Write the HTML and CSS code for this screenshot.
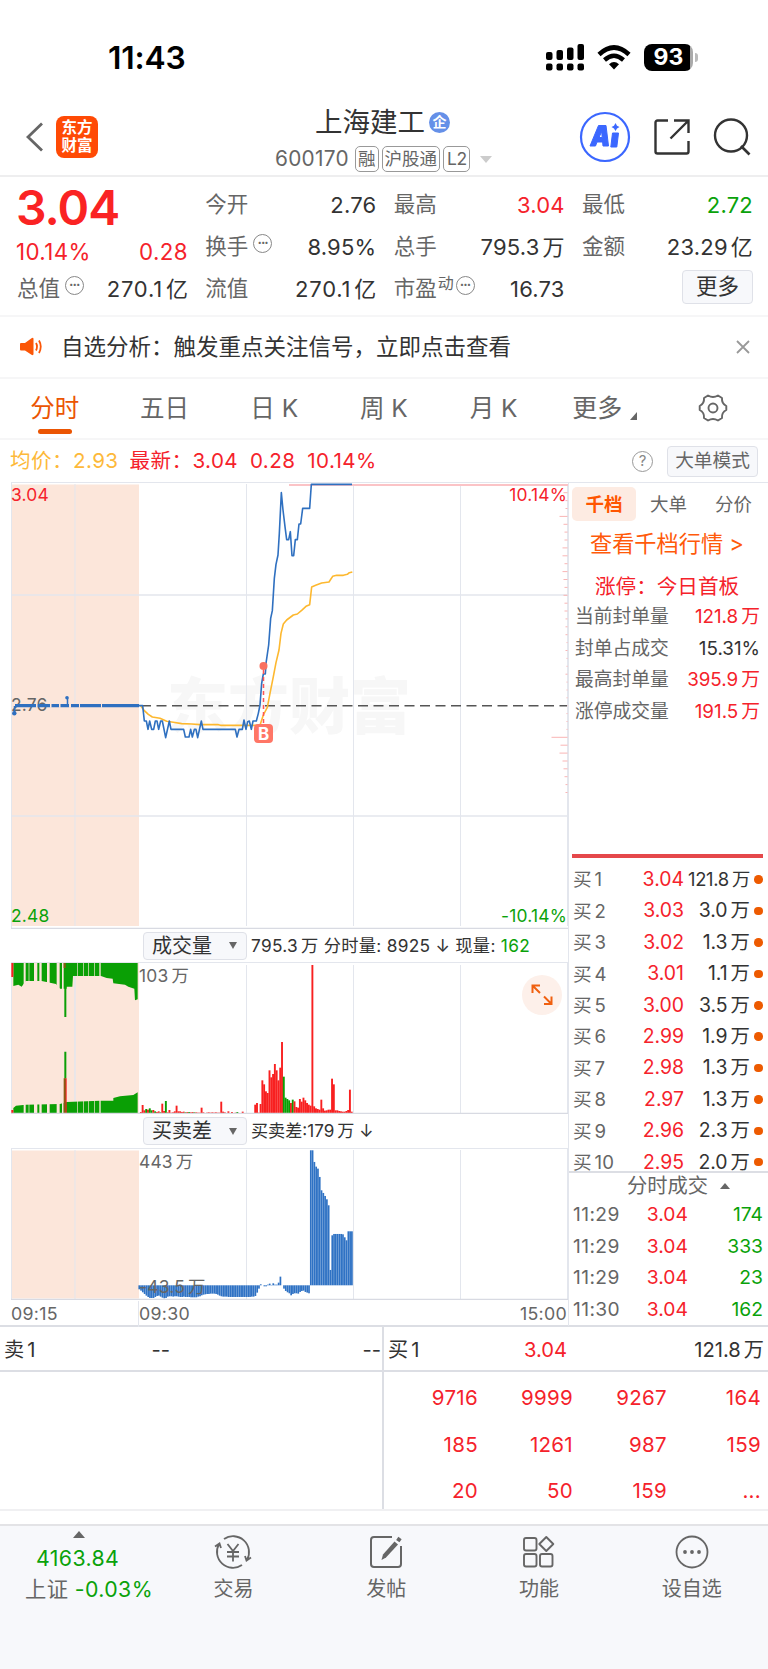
FILE: index.html
```html
<!DOCTYPE html>
<html lang="zh-CN">
<head>
    <meta charset="UTF-8">
    <meta name="viewport" content="width=device-width, initial-scale=1.0">
    <title>上海建工 600170</title>
    <link rel="stylesheet" href="styles.css">
</head>
<body>

<!-- Phone status bar -->
<div class="status-bar">
    <span class="clock">11:43</span>
    <div class="status-icons">
        <svg class="signal" width="38" height="27" viewBox="0 0 38 27">
            <g fill="#000">
                <rect x="0" y="8" width="6.5" height="8" rx="2"/>
                <rect x="10.5" y="6" width="6.5" height="10" rx="2"/>
                <rect x="21" y="3.5" width="6.5" height="12.5" rx="2"/>
                <rect x="31.5" y="0" width="6.5" height="16" rx="2"/>
                <rect x="0" y="19.5" width="6.5" height="7" rx="2"/>
                <rect x="10.5" y="19.5" width="6.5" height="7" rx="2"/>
                <rect x="21" y="19.5" width="6.5" height="7" rx="2"/>
                <rect x="31.5" y="19.5" width="6.5" height="7" rx="2"/>
            </g>
        </svg>
        <svg class="wifi" width="34" height="25" viewBox="0 0 34 25">
            <path d="M2 9.5 Q17 -4.5 32 9.5" fill="none" stroke="#000" stroke-width="4.6"/>
            <path d="M7.5 15 Q17 6.5 26.5 15" fill="none" stroke="#000" stroke-width="4.4"/>
            <path d="M12 19.2 Q17 14.8 22 19.2 L17 24.5 Z" fill="#000"/>
        </svg>
        <div class="battery"><span>93</span></div>
        <i class="battery-tip"></i>
    </div>
</div>

<!-- Title bar -->
<header class="title-bar">
    <div class="title-left">
        <svg width="18" height="30" viewBox="0 0 18 30"><path d="M16 1.5 L2 15 L16 28.5" fill="none" stroke="#666" stroke-width="2.8"/></svg>
        <div class="logo"><span>东方</span><span>财富</span></div>
    </div>
    <div class="title-center">
        <div class="stock-name">上海建工<span class="badge">企</span></div>
        <div class="stock-code">
            <span class="code">600170</span>
            <span class="tag">融</span><span class="tag">沪股通</span><span class="tag">L2</span>
            <i class="caret-light"></i>
        </div>
    </div>
    <div class="title-right">
        <svg width="52" height="52" viewBox="0 0 52 52">
            <circle cx="26" cy="26" r="24" fill="none" stroke="#3b67ff" stroke-width="2.2"/>
            <path d="M11 35 L19.5 14.5 H27 L29.5 35 H24 L23.6 31 H18 L16.5 35 Z M20 26.5 H23.2 L22.7 20.5 Z" fill="#3b67ff" fill-rule="evenodd" stroke="#3b67ff" stroke-linejoin="round"/>
            <path d="M33.5 22 H39.5 L37.8 36 H31.8 Z" fill="#3b67ff" stroke="#3b67ff" stroke-linejoin="round"/>
            <path d="M36.5 12 L38 14.7 L40.5 16 L38 17.5 L36.5 20 L35 17.5 L32.5 16 L35 14.7 Z" fill="#3b67ff"/>
        </svg>
        <svg width="36" height="36" viewBox="0 0 36 36">
            <path d="M14 1.5 H3.5 A2 2 0 0 0 1.5 3.5 V32.5 A2 2 0 0 0 3.5 34.5 H32.5 A2 2 0 0 0 34.5 32.5 V22 M20 1.5 H34.5 V14 M34 2 L16.5 19.5" fill="none" stroke="#333" stroke-width="2.4"/>
        </svg>
        <svg width="38" height="38" viewBox="0 0 38 38">
            <circle cx="18" cy="17.5" r="16" fill="none" stroke="#333" stroke-width="2.4"/>
            <path d="M28 28 L36.5 36.5" stroke="#333" stroke-width="2.6"/>
        </svg>
    </div>
</header>

<!-- Quote summary -->
<section class="quote">
    <div class="quote-col">
        <div class="big-price">3.04</div>
        <div class="cell change red"><span>10.14%</span><span>0.28</span></div>
        <div class="cell"><label>总值<i class="dots">•••</i></label><span class="wide">270.1<em>亿</em></span></div>
    </div>
    <div class="quote-col">
        <div class="cell"><label>今开</label><span>2.76</span></div>
        <div class="cell"><label>换手<i class="dots">•••</i></label><span>8.95%</span></div>
        <div class="cell"><label>流值</label><span class="wide">270.1<em>亿</em></span></div>
    </div>
    <div class="quote-col">
        <div class="cell"><label>最高</label><span class="red">3.04</span></div>
        <div class="cell"><label>总手</label><span>795.3<em>万</em></span></div>
        <div class="cell"><label>市盈<sup>动</sup><i class="dots tight">•••</i></label><span>16.73</span></div>
    </div>
    <div class="quote-col">
        <div class="cell"><label>最低</label><span class="green">2.72</span></div>
        <div class="cell"><label>金额</label><span>23.29<em>亿</em></span></div>
        <div class="cell right"><button class="more-btn">更多</button></div>
    </div>
</section>

<!-- Signal notice -->
<div class="notice">
    <svg width="23" height="20" viewBox="0 0 23 20">
        <path d="M1 6 H5 L11.5 1.2 Q13.5 0.2 13.5 2 V17 Q13.5 18.8 11.5 17.8 L5 13.5 H1 Q0 13.5 0 12.5 V7 Q0 6 1 6 Z" fill="#fb5607"/>
        <path d="M16 6 Q18 9.5 16 13.5 M19 3.5 Q22.5 9.5 19 16" fill="none" stroke="#fb5607" stroke-width="1.8"/>
    </svg>
    <p>自选分析：触发重点关注信号，立即点击查看</p>
    <svg width="14" height="14" viewBox="0 0 14 14"><path d="M1 1 L13 13 M13 1 L1 13" stroke="#999" stroke-width="1.8"/></svg>
</div>

<!-- Period tabs -->
<nav class="tabs">
    <span class="active">分时</span>
    <span>五日</span>
    <span>日 K</span>
    <span>周 K</span>
    <span>月 K</span>
    <span class="tab-more">更多<i></i></span>
    <span class="gear">
        <svg width="30" height="30" viewBox="0 0 30 30">
            <path d="M10 2.5 Q15 5.5 20 2.5 L24 5 Q23.5 10.5 28.3 13 V17 Q23.5 19.5 24 25 L20 27.5 Q15 24.5 10 27.5 L6 25 Q6.5 19.5 1.7 17 V13 Q6.5 10.5 6 5 Z" fill="none" stroke="#666" stroke-width="1.9" stroke-linejoin="round"/>
            <circle cx="15" cy="15" r="4.5" fill="none" stroke="#666" stroke-width="1.9"/>
        </svg>
    </span>
</nav>

<div class="price-info">
    <span class="avg">均价：</span><span class="avg v1">2.93</span>
    <span class="red">最新：</span><span class="red v2">3.04</span><span class="red v3">0.28</span><span class="red">10.14%</span>
    <i class="help">?</i>
    <button class="mode-btn">大单模式</button>
</div>

<!-- Charts and order book -->
<main class="board">
    <div class="charts">
        <svg class="price-chart" width="557" height="447" viewBox="11 482 557 447">
            <rect x="11" y="484.5" width="128" height="441.5" fill="#fce6da"/>
            <text x="167" y="729" class="watermark">东方财富</text>
            <path class="grid" d="M11 482.5 H568 M11.5 482 V928 M75 484 V926 M246.5 484 V926 M353.5 484 V926 M460.5 484 V926 M567.5 484 V926"/>
            <path class="grid thick" d="M11 595 H568 M11 816 H568"/>
            <path class="grid dark" d="M11 928.5 H568"/>
            <path id="ticks" d="" stroke="#f9b5b5" stroke-width="1"/>
            <path d="M289 485 H568" stroke="#fbc3c6" stroke-width="2"/>
            <text x="11" y="500.5" class="axis red">3.04</text>
            <text x="567" y="500.5" class="axis red" text-anchor="end">10.14%</text>
            <text x="11" y="711" class="axis">2.76</text>
            <text x="11" y="921.5" class="axis green">2.48</text>
            <text x="567" y="921.5" class="axis green" text-anchor="end">-10.14%</text>
            <path d="M141 705.7 H567" stroke="#555" stroke-width="1.5" stroke-dasharray="10 5.5"/>
            <!-- Pre-open trades -->
            <path d="M15 705.7 H139" stroke="#2f70c0" stroke-width="3.2"/>
            <path d="M36 705.7 h1.5 M50 705.7 h1.5 M59 705.7 h1.5 M69 705.7 h2 M79 705.7 h1 M101 705.7 h1" stroke="#fce6da" stroke-width="4"/>
            <path d="M14.5 706 V713 M67.5 706 V698" stroke="#2f70c0" stroke-width="1.5"/>
            <circle cx="14.3" cy="713.3" r="2.2" fill="#2f70c0"/>
            <circle cx="67" cy="697.8" r="1.8" fill="#2f70c0"/>
            <!-- Average and last price -->
            <g transform="translate(0 470) scale(0.33333)" fill="none" stroke-width="4.8" stroke-linejoin="round">
                <polyline stroke="#fdb82f" points="422,707 433,722 445,733 457,741 480,745 500,754 520,757 545,761 575,762 600,764 655,764 662,766 780,766 790,735 802,712 810,670 820,620 828,578 837,540 843,490 850,462 860,450 880,435 892,432 905,421 918,409 929,404 935,351 947,346 965,339 987,336 998,319 1010,316 1030,316 1042,313 1048,308 1057,306"/>
                <polyline stroke="#2f70c0" points="415,707 428,707 433,753 439,753 444,778 449,753 455,778 461,778 466,753 471,753 476,778 482,753 487,753 497,803 508,753 513,778 551,778 556,801 567,801 572,778 577,801 583,778 588,778 593,803 604,753 609,778 706,778 711,801 717,778 727,778 732,750 738,778 743,755 748,753 754,778 759,753 769,753 775,730 780,705 785,640 790,612 796,612 798,580 806,525 812,445 817,422 823,325 828,283 834,255 838,190 844,68 849,120 855,170 860,209 866,209 871,185 876,257 881,257 886,209 892,209 897,162 902,162 908,115 929,115 934,43 1056,43"/>
            </g>
            <!-- Buy marker -->
            <path d="M263.5 670 V724" stroke="#f55" stroke-width="1.5" stroke-dasharray="4 3"/>
            <circle cx="263.5" cy="666" r="4" fill="#f9705f"/>
            <rect x="254" y="724" width="19" height="19" rx="4" fill="#ff7666"/>
            <text x="263.5" y="739.5" class="buy-mark" text-anchor="middle">B</text>
        </svg>

        <div class="chart-head">
            <button class="indicator">成交量<i></i></button>
            <span class="spaced">795.3<em>万</em> 分时量: 8925 ↓ 现量: <b class="green">162</b></span>
        </div>

        <div class="volume">
            <svg width="557" height="152" viewBox="11 962 557 152">
                <rect x="11" y="963" width="128" height="150" fill="#fce6da"/>
                <path class="grid" d="M11 962.5 H568 M11.5 962 V1114 M75 963 V1113 M246.5 965 V1113 M353.5 965 V1113 M460.5 965 V1113 M567.5 962 V1114"/>
                <g transform="translate(0 890) scale(0.33333)">
                    <path fill="#0a9f05" d="M40 219 H413 V328 L405 331 L403 296 L385 290 L375 284 L340 280 L338 266 L320 264 L303 258 H219 L217 290 H200 V296 H180 L168 282 L150 278 L125 273 H77 L65 290 L55 284 L40 288 Z"/>
                    <path fill="#0a9f05" d="M40 669 V654 L48 647 L77 644 L180 642 L200 636 L300 632 H340 V624 L360 619 L400 615 L413 607 V669 Z"/>
                    <path fill="#fce6da" d="M71 219 h6 v450 h-6 z M102 219 h10 v450 h-10 z M118 219 h7 v450 h-7 z M141 219 h8 v450 h-8 z M170 219 h9 v450 h-9 z M186 219 h5 v450 h-5 z M86 219 h2 v450 h-2 z M232 219 h2 v450 h-2 z M250 219 h2 v450 h-2 z M265 219 h2 v450 h-2 z M282 219 h2 v450 h-2 z M298 219 h4 v450 h-4 z"/>
                    <path fill="#f82020" d="M34 219 h6 v42 h-6 z M34 660 h6 v9 h-6 z M193 565 h7 v104 h-7 z"/>
                    <path fill="#0a9f05" d="M193 235 h6 v146 h-6 z M193 485 h6 v80 h-6 z"/>
                    <path fill="#8a5a12" d="M191 219 h6 v15 h-6 z M191 565 h6 v104 h-6 z"/>
                </g>
                <path class="grid" d="M75 976 V1101"/>
                <g id="volume-bars"></g>
                <path class="grid dark" d="M11 1113.5 H568"/>
                <text x="139" y="982" class="axis">103<tspan dx="3">万</tspan></text>
            </svg>
            <div class="expand">
                <svg width="22" height="22" viewBox="0 0 22 22"><path d="M1.5 9 V1.5 H9 M2 2 L9 9 M20.5 12.5 V20 H13 M20 19.5 L13 12.5" fill="none" stroke="#f06010" stroke-width="2"/></svg>
            </div>
        </div>

        <div class="chart-head">
            <button class="indicator">买卖差<i></i></button>
            <span>买卖差:179<em>万</em> ↓</span>
        </div>

        <svg class="diff-chart" width="557" height="152" viewBox="11 1148 557 152">
            <rect x="11" y="1150.5" width="128" height="148" fill="#fce6da"/>
            <path class="grid" d="M11 1148.5 H568 M11.5 1148 V1300 M75 1150 V1299 M246.5 1150 V1299 M353.5 1150 V1299 M460.5 1150 V1299 M567.5 1148 V1300"/>
            <g id="diff-bars"></g>
            <path class="grid dark" d="M11 1299.5 H568"/>
            <text x="139" y="1167.5" class="axis">443<tspan dx="3">万</tspan></text>
            <text x="139" y="1293" class="axis">-43.5<tspan dx="3">万</tspan></text>
        </svg>
        <div class="times"><span>09:15</span><span class="open">09:30</span><span class="close">15:00</span></div>
    </div>

    <aside class="book">
        <div class="book-tabs"><span class="on">千档</span><span>大单</span><span>分价</span></div>
        <div class="book-link">查看千档行情 &gt;</div>
        <div class="limit-title">涨停：今日首板</div>
        <div class="limit-row"><span>当前封单量</span><span class="red">121.8<em>万</em></span></div>
        <div class="limit-row"><span>封单占成交</span><span class="dark">15.31%</span></div>
        <div class="limit-row"><span>最高封单量</span><span class="red">395.9<em>万</em></span></div>
        <div class="limit-row"><span>涨停成交量</span><span class="red">191.5<em>万</em></span></div>
        <div class="divider"></div>
        <div class="bids">
            <div class="bid"><span>买<em>1</em></span><span class="red">3.04</span><span class="qty first">121.8<em>万</em></span><i></i></div>
            <div class="bid"><span>买<em>2</em></span><span class="red">3.03</span><span class="qty">3.0<em>万</em></span><i></i></div>
            <div class="bid"><span>买<em>3</em></span><span class="red">3.02</span><span class="qty">1.3<em>万</em></span><i></i></div>
            <div class="bid"><span>买<em>4</em></span><span class="red">3.01</span><span class="qty">1.1<em>万</em></span><i></i></div>
            <div class="bid"><span>买<em>5</em></span><span class="red">3.00</span><span class="qty">3.5<em>万</em></span><i></i></div>
            <div class="bid"><span>买<em>6</em></span><span class="red">2.99</span><span class="qty">1.9<em>万</em></span><i></i></div>
            <div class="bid"><span>买<em>7</em></span><span class="red">2.98</span><span class="qty">1.3<em>万</em></span><i></i></div>
            <div class="bid"><span>买<em>8</em></span><span class="red">2.97</span><span class="qty">1.3<em>万</em></span><i></i></div>
            <div class="bid"><span>买<em>9</em></span><span class="red">2.96</span><span class="qty">2.3<em>万</em></span><i></i></div>
            <div class="bid"><span>买<em>10</em></span><span class="red">2.95</span><span class="qty">2.0<em>万</em></span><i></i></div>
        </div>
        <div class="deals-title">分时成交<i></i></div>
        <div class="deal"><span>11:29</span><span class="red">3.04</span><span class="green">174</span></div>
        <div class="deal"><span>11:29</span><span class="red">3.04</span><span class="green">333</span></div>
        <div class="deal"><span>11:29</span><span class="red">3.04</span><span class="green">23</span></div>
        <div class="deal"><span>11:30</span><span class="red">3.04</span><span class="green">162</span></div>
    </aside>
</main>

<!-- Best bid / ask queue -->
<section class="queue">
    <div class="queue-side">
        <div class="queue-head sell"><span>卖<em>1</em></span><span>--</span><span>--</span></div>
    </div>
    <div class="queue-side">
        <div class="queue-head"><span>买<em>1</em></span><span class="red">3.04</span><span>121.8<em>万</em></span></div>
        <div class="queue-grid">
            <span>9716</span><span>9999</span><span>9267</span><span>164</span>
            <span>185</span><span>1261</span><span>987</span><span>159</span>
            <span>20</span><span>50</span><span>159</span><span>...</span>
        </div>
    </div>
</section>

<!-- Bottom navigation -->
<footer class="bottom-nav">
    <div class="index">
        <i></i>
        <span class="green">4163.84</span>
        <span>上证 <b class="green">-0.03%</b></span>
    </div>
    <div class="nav-item">
        <svg width="38" height="36" viewBox="0 0 38 36" fill="none" stroke="#666" stroke-width="1.8">
            <path d="M10 5 A16 16 0 0 1 33 26 M28 31 A16 16 0 0 1 5 10 M1 12.5 L5.5 9.5 L7 14 M37 23.5 L32.5 26.5 L31 22"/>
            <path d="M13.5 10 L19 17 L24.5 10 M19 17 V27.5 M13 18 H25 M13 22.5 H25"/>
        </svg>
        <span>交易</span>
    </div>
    <div class="nav-item">
        <svg width="34" height="36" viewBox="0 0 34 36" fill="none" stroke="#666" stroke-width="2">
            <path d="M23 3 H5 Q2 3 2 6 V30 Q2 33 5 33 H29 Q32 33 32 30 V12"/>
            <path d="M28.8 7.2 L31 4" stroke-width="4"/>
            <path d="M25.5 7.5 L29 10.5 L17 23.5 L12.5 26 L14 20.5 Z" fill="#666" stroke="none"/>
        </svg>
        <span>发帖</span>
    </div>
    <div class="nav-item">
        <svg width="34" height="36" viewBox="0 0 34 36" fill="none" stroke="#666" stroke-width="1.9">
            <rect x="2" y="4" width="12.5" height="12.5" rx="2"/>
            <rect x="2" y="20" width="12.5" height="12.5" rx="2"/>
            <rect x="18" y="20" width="12.5" height="12.5" rx="2"/>
            <path d="M24.3 3 L31.3 10 L24.3 17 L17.3 10 Z" stroke-linejoin="round"/>
        </svg>
        <span>功能</span>
    </div>
    <div class="nav-item">
        <svg width="34" height="36" viewBox="0 0 34 36">
            <circle cx="17" cy="18" r="15.5" fill="none" stroke="#666" stroke-width="1.8"/>
            <g fill="#666"><circle cx="10" cy="18" r="1.9"/><circle cx="17" cy="18" r="1.9"/><circle cx="24" cy="18" r="1.9"/></g>
        </svg>
        <span>设自选</span>
    </div>
</footer>

<script src="script.js"></script>
</body>
</html>
```

FILE: styles.css
```css
* {
    box-sizing: border-box;
}
body {
    margin: 0;
    width: 768px;
    background-color: #fff;
    color: #333;
    font-family: Inter, "Noto Sans CJK SC", sans-serif;
    font-size: 20px;
    line-height: 1;
}
i, em {
    font-style: normal;
}
b {
    font-weight: 400;
}
em {
    margin-left: 3px;
}
svg {
    display: block;
    flex-shrink: 0;
}
button {
    font-family: inherit;
    line-height: 1;
    padding: 0;
    color: #333;
    background-color: #f7f8fb;
    border: 1.5px solid #dfe1e8;
    border-radius: 4px;
}
.red {
    color: #f5222b;
    fill: #f5222b;
}
.green {
    color: #0aa20a;
    fill: #0aa20a;
}
.dark {
    color: #333;
}

/* status bar */
.status-bar {
    height: 98px;
    padding: 17px 70px 0 108px;
    display: flex;
    justify-content: space-between;
    align-items: center;
}
.clock {
    font-size: 31.8px;
    font-weight: 600;
    color: #000;
    letter-spacing: -0.2px;
}
.status-icons {
    display: flex;
    align-items: center;
    padding-bottom: 1px;
}
.wifi {
    margin: 0 13px;
}
.battery {
    width: 49px;
    height: 27px;
    border-radius: 8px;
    background: linear-gradient(90deg, #000 94%, #aaa 94%);
    color: #fff;
    font-size: 23px;
    font-weight: 700;
    text-align: center;
    line-height: 27px;
}
.battery-tip {
    width: 3px;
    height: 9px;
    margin-left: 2px;
    border-radius: 0 3px 3px 0;
    background-color: #bbb;
}

/* title bar */
.title-bar {
    height: 79px;
    border-bottom: 2px solid #eeeeef;
    display: grid;
    grid-template-columns: 240px 288px 240px;
}
.title-left {
    display: flex;
    align-items: center;
    gap: 12px;
    padding-left: 26px;
}
.logo {
    width: 42px;
    height: 42px;
    border-radius: 8px;
    background-color: #ff4a05;
    color: #fff;
    font-size: 15.5px;
    font-weight: 700;
    display: flex;
    flex-direction: column;
    align-items: center;
    justify-content: center;
    gap: 2px;
}
.title-center {
    padding-top: 10px;
}
.stock-name {
    display: flex;
    align-items: center;
    height: 29px;
    padding-left: 75px;
    font-size: 27.5px;
}
.badge {
    width: 21px;
    height: 21px;
    margin-left: 4px;
    border-radius: 50%;
    background-color: #6590e8;
    color: #fff;
    font-size: 14px;
    font-weight: 700;
    line-height: 20px;
    text-align: center;
}
.stock-code {
    display: flex;
    align-items: center;
    gap: 3px;
    margin-top: 9px;
    padding-left: 35px;
    color: #666;
}
.code {
    width: 77px;
    font-size: 20.8px;
    letter-spacing: 0.3px;
}
.tag {
    height: 26px;
    border: 1.5px solid #999;
    border-radius: 5px;
    padding: 0 2px;
    font-size: 17.5px;
    line-height: 23px;
}
.tag:nth-child(4) {
    letter-spacing: -0.5px;
    padding-left: 3px;
}
.caret-light {
    margin-left: 7px;
    border: 6.5px solid transparent;
    border-top: 7px solid #ccc;
    border-bottom: 0;
}
.title-right {
    display: flex;
    align-items: center;
    padding-left: 51px;
}
.title-right svg:nth-child(2) {
    margin: 0 23px 0 23px;
}

/* quote summary */
.quote {
    height: 140px;
    padding: 7px 15px 0 17px;
    border-bottom: 2px solid #f6f6f7;
    display: grid;
    grid-template-columns: repeat(4, 171px);
    justify-content: space-between;
}
.cell {
    height: 42px;
    display: flex;
    justify-content: space-between;
    align-items: center;
    font-size: 22px;
    letter-spacing: 0.2px;
}
.cell label {
    position: relative;
    color: #666;
    display: flex;
    align-items: center;
    font-size: 21.5px;
    letter-spacing: 0;
}
.cell .wide {
    letter-spacing: 0.8px;
    margin-right: -0.8px;
}
.cell.right {
    justify-content: flex-end;
}
.cell.change {
    height: 32px;
    font-size: 22.3px;
    letter-spacing: 0.4px;
    margin-left: -1px;
}
.big-price {
    height: 52px;
    font-size: 48px;
    font-weight: 600;
    line-height: 48px;
    color: #fa2323;
    letter-spacing: -1px;
    margin-left: -1px;
}
.dots {
    width: 19px;
    height: 19px;
    margin: -8px 0 0 5px;
    border: 1.5px solid #888;
    border-radius: 50%;
    font-size: 7px;
    line-height: 16px;
    text-align: center;
    letter-spacing: -0.5px;
}
.dots.tight {
    margin-left: 2px;
}
.cell sup {
    font-size: 16px;
    margin: -12px 0 0 1px;
    line-height: 1;
}
.more-btn {
    width: 71px;
    height: 34px;
    font-size: 21.5px;
    margin-top: -4px;
}

/* notice */
.notice {
    height: 62px;
    border-bottom: 2px solid #f6f6f7;
    padding: 0 18px 0 20px;
    display: flex;
    align-items: center;
}
.notice p {
    flex: 1;
    margin: 0 0 0 18px;
    font-size: 22.5px;
}

/* tabs */
.tabs {
    height: 61px;
    border-bottom: 2px solid #f6f6f7;
    display: grid;
    grid-template-columns: repeat(7, 109.7px);
}
.tabs span {
    position: relative;
    display: flex;
    align-items: center;
    justify-content: center;
    color: #666;
    font-size: 24.5px;
    padding-bottom: 1px;
}
.tabs .active {
    color: #eb5503;
}
.tabs .active::after {
    content: "";
    position: absolute;
    bottom: 4px;
    left: 38px;
    width: 34px;
    height: 5px;
    border-radius: 3px;
    background-color: #eb5503;
}
.tabs .tab-more {
    font-size: 25px;
    padding-left: 3px;
}
.tab-more i {
    margin: 16px 0 0 8px;
    border-left: 7px solid transparent;
    border-bottom: 8px solid #666;
}

.price-info {
    height: 42px;
    padding: 0 10px;
    display: flex;
    align-items: center;
    font-size: 20.6px;
    letter-spacing: 0.4px;
}
.avg {
    color: #fdb93a;
}
.price-info .v1 {
    margin-right: 11px;
}
.price-info .v2, .price-info .v3 {
    margin-right: 12px;
}
.help {
    width: 21px;
    height: 21px;
    margin-left: auto;
    border: 1.5px solid #999;
    border-radius: 50%;
    color: #888;
    font-size: 15px;
    line-height: 18px;
    text-align: center;
    letter-spacing: 0;
}
.mode-btn {
    width: 91px;
    height: 31px;
    margin-left: 14px;
    font-size: 18.7px;
    color: #666;
}

/* charts */
.board {
    height: 845px;
    display: grid;
    grid-template-columns: 568px 200px;
    border-bottom: 2px solid #dcdee4;
}
.charts {
    padding-left: 11px;
}
.grid {
    fill: none;
    stroke: #e3e6ed;
    stroke-width: 1;
}
.grid.thick {
    stroke-width: 1.5;
}
.grid.dark {
    stroke: #d8dae2;
    stroke-width: 1.5;
}
.axis {
    font-size: 17.4px;
    letter-spacing: 0.2px;
    fill: #666;
}
.axis.red {
    fill: #f5222b;
}
.axis.green {
    fill: #0aa20a;
}
.watermark {
    font-size: 61px;
    font-weight: 900;
    fill: #f7f7f7;
}
.buy-mark {
    font-size: 17px;
    font-weight: 700;
    fill: #fff;
}
.chart-head {
    height: 34px;
    padding-left: 132px;
    display: flex;
    align-items: center;
    font-size: 17.1px;
    white-space: pre;
}
.chart-head:first-of-type {
    height: 33px;
}
.chart-head .spaced {
    font-size: 17.3px;
    letter-spacing: 0.28px;
    padding-top: 1px;
}
.indicator {
    width: 104px;
    height: 28px;
    margin-right: 4px;
    padding: 0 9px 0 8px;
    display: flex;
    align-items: center;
    justify-content: space-between;
    font-size: 20px;
}
.indicator i {
    border: 4px solid transparent;
    border-top: 7px solid #666;
    border-bottom: 0;
}
.volume {
    position: relative;
}
.expand {
    position: absolute;
    right: 6px;
    top: 13px;
    width: 40px;
    height: 40px;
    border-radius: 50%;
    background-color: #fdf0ea;
    display: flex;
    align-items: center;
    justify-content: center;
}
.times {
    display: flex;
    height: 26px;
    align-items: center;
    color: #666;
    font-size: 17.8px;
    letter-spacing: 0.3px;
    padding-top: 1px;
}
.times .open {
    display: flex;
    align-items: center;
    height: 26px;
    border-left: 1px solid #e3e6ed;
}
.times span:first-child {
    width: 127px;
}
.times .close {
    margin-left: auto;
    padding-right: 1px;
}

/* order book */
.book {
    border-left: 1px solid #e3e6ed;
    border-top: 1px solid #e3e6ed;
    padding-left: 3px;
}
.book-tabs {
    display: grid;
    grid-template-columns: 64px 65px 65px;
    margin-top: 4px;
    height: 34px;
    text-align: center;
    line-height: 34px;
    font-size: 18.5px;
    color: #666;
}
.book-tabs .on {
    border-radius: 5px;
    background-color: #fdebe2;
    color: #ff5500;
    font-weight: 600;
}
.book-link {
    height: 45px;
    padding-left: 18px;
    line-height: 46px;
    font-size: 22.2px;
    color: #ff5a0a;
}
.limit-title {
    height: 36px;
    padding-left: 23px;
    line-height: 41px;
    font-size: 20.6px;
    color: #f5222b;
}
.limit-row {
    height: 31.5px;
    display: flex;
    justify-content: space-between;
    align-items: center;
    padding: 0 8px 0 3px;
    font-size: 18.8px;
    color: #666;
}
.divider {
    margin: 126px 5px 0 0;
    height: 4px;
    background-color: #e5484b;
}
.bids {
    height: 313px;
    padding-top: 6px;
}
.bid {
    height: 31.4px;
    display: grid;
    grid-template-columns: 40px 71px 66px 20px;
    align-items: center;
    padding-left: 1px;
    font-size: 19.4px;
    color: #666;
    text-align: right;
    white-space: nowrap;
}
.bid span:first-child {
    text-align: left;
    font-size: 18.6px;
}
.qty {
    color: #333;
}
.bid .first {
    font-size: 18.4px;
    letter-spacing: -0.3px;
}
.bid i {
    width: 8.5px;
    height: 8.5px;
    margin-left: 4px;
    border-radius: 50%;
    background-color: #ed5a00;
}
.deals-title {
    height: 28px;
    margin-left: -3px;
    border-top: 2px solid #dcdee4;
    padding-left: 58px;
    display: flex;
    align-items: center;
    font-size: 20.3px;
    color: #666;
}
.deals-title i {
    margin-left: 12px;
    border: 5px solid transparent;
    border-bottom: 6px solid #666;
    border-top: 0;
}
.deal {
    height: 31.6px;
    display: grid;
    grid-template-columns: 52px 63px 75px;
    align-items: center;
    padding-left: 1px;
    font-size: 19.3px;
    color: #666;
    text-align: right;
}
.deal span:first-child {
    text-align: left;
    font-size: 19.2px;
    letter-spacing: 0.4px;
}

/* bid / ask queue */
.queue {
    height: 184px;
    display: grid;
    grid-template-columns: 384px 384px;
    grid-template-rows: 182px;
    overflow: hidden;
    border-bottom: 2px solid #f0f0f2;
}
.queue-side:first-child {
    border-right: 2px solid #dcdee4;
}
.queue-head {
    height: 45px;
    border-bottom: 2px solid #dcdee4;
    padding: 4px 4px 0 4px;
    display: grid;
    grid-template-columns: 120px 59px 1fr;
    align-items: center;
    font-size: 20.2px;
}
.queue-head.sell {
    grid-template-columns: 108px 58px 1fr;
    padding-right: 1px;
}
.queue-head span:not(:first-child) {
    text-align: right;
}
.queue-grid {
    display: grid;
    grid-template-columns: 94px 95px 94px 94px;
    grid-auto-rows: 46.5px;
    align-items: center;
    padding-top: 3px;
    text-align: right;
    color: #f5222b;
    font-size: 20.5px;
    letter-spacing: 0.3px;
}

/* bottom navigation */
.bottom-nav {
    margin-top: 13px;
    height: 145px;
    border-top: 2px solid #e3e3e6;
    background-color: #f7f8fb;
    display: grid;
    grid-template-columns: 157px repeat(4, 152.8px);
    color: #666;
    font-size: 20px;
}
.index {
    display: flex;
    flex-direction: column;
    align-items: center;
    white-space: nowrap;
    padding: 5px 0 0 20px;
    width: 160px;
}
.index i {
    border: 6px solid transparent;
    border-bottom: 7px solid #666;
    border-top: 0;
    margin-bottom: 9px;
    align-self: flex-start;
    margin-left: 53px;
}
.index span {
    height: 31px;
    align-self: flex-start;
    padding-left: 5px;
    line-height: 22px;
    font-size: 21.3px;
    letter-spacing: 0.4px;
}
.index span:nth-child(2) {
    padding-left: 16px;
}
.nav-item {
    display: flex;
    flex-direction: column;
    align-items: center;
    padding-top: 8px;
}
.nav-item span {
    margin-top: 9px;
}
```

FILE: script.js
```js
const NS = 'http://www.w3.org/2000/svg';
const STEP = 1.787;   // width of one minute
const OPEN_X = 139;

function addBar(group, x, y, w, h, color) {
    const r = document.createElementNS(NS, 'rect');
    r.setAttribute('x', x);
    r.setAttribute('y', y);
    r.setAttribute('width', w);
    r.setAttribute('height', h);
    r.setAttribute('fill', color);
    group.appendChild(r);
}

// Volume per minute, a negative value is a falling minute
const volume = [
    0, 3, 24, 8, -12, 10, -14, -8, 9, -5, 3, 5, -2, 28, 6, -36, 2, 9, 1, 2, 5, 22, 5, 5, 3, 4, -2, 3, -3, 2,
    3, -2, 2, 1, 1, 16, 2, 0, 1, 2, 1, 2, 1, 2, 1, 1, 34, 4, 2, 0, 5, 0, 3, 0, 1, -3, 0, 0, 4, 0,
    0, 0, 0, 0, 0, 25, 30, 1, 27, 98, 86, 65, 60, 128, 107, 117, 147, 128, 98, 136, 213, -109, -46, -42, -38, 30,
    -40, 35, 18, 16, 42, 34, 46, 38, 30, 25, 22, 444, 20, 14, 12, 10, 40, 14, 7, 8, 10, 10, 103, 86, 8, 8, 6, 5, 4, 4, 6, 9, 70, 4
];
const volumeBars = document.getElementById('volume-bars');
volume.forEach((v, i) => {
    const h = Math.abs(v) / 3;
    addBar(volumeBars, OPEN_X + STEP * i - 0.9, 1113 - h, 1.9, h, v < 0 ? '#0a9f05' : '#f82020');
});

// Buy / sell difference per minute
const diff = [
    -12, -16, -21, -26, -31, -35, -38, -38, -38, -35, -32, -31, -34, -37, -39, -38, -34, -33, -33, -34,
    -33, -33, -34, -35, -35, -34, -35, -35, -35, -36, -36, -36, -36, -34, -33, -30, -28, -27, -26, -26, -25, -25, -25, -26, -28,
    -31, -33, -34, -34, -34, -35, -35, -35, -35, -35, -35, -35, -35, -35, -35, -35, -35, -35, -34, -34,
    -32, -22, -10, 3, 0, -3, -3, 2, 5, 1, 6, 2, 2, 8, 26, 0, -10, -17, -21, -24,
    -30, -26, -24, -24, -25, -20, -17, -16, -20, -22, -24, 405, 405, 370, 356, 350, 325, 285, 277, 268, 258, 240, 46,
    150, 154, 154, 154, 154, 154, 153, 144, 135, 162, 162, 162
];
const diffBars = document.getElementById('diff-bars');
diff.forEach((v, i) => {
    const h = Math.abs(v) / 3;
    addBar(diffBars, OPEN_X + STEP * i - 0.6, v > 0 ? 1285.3 - h : 1285.3, 1.7, h, '#2f72c4');
});

// Order distribution along the right edge, one tick per price level
const levels = [
    4, 2, 2, 8, 4, 3, 3, 5, 5, 3, 5, 4, 3, 4, 3, 3, 2, 2, 2, 1, 2, 1, 1, 2, 1, 1, 1, 1, 1, 1, 1,
    16, 7, 8, 5, 4, 3, 2, 2
];
document.getElementById('ticks').setAttribute('d', levels.map((w, i) => {
    return 'M567.5 ' + (492.7 + 7.89 * i).toFixed(1) + ' h-' + w;
}).join(' '));
```
